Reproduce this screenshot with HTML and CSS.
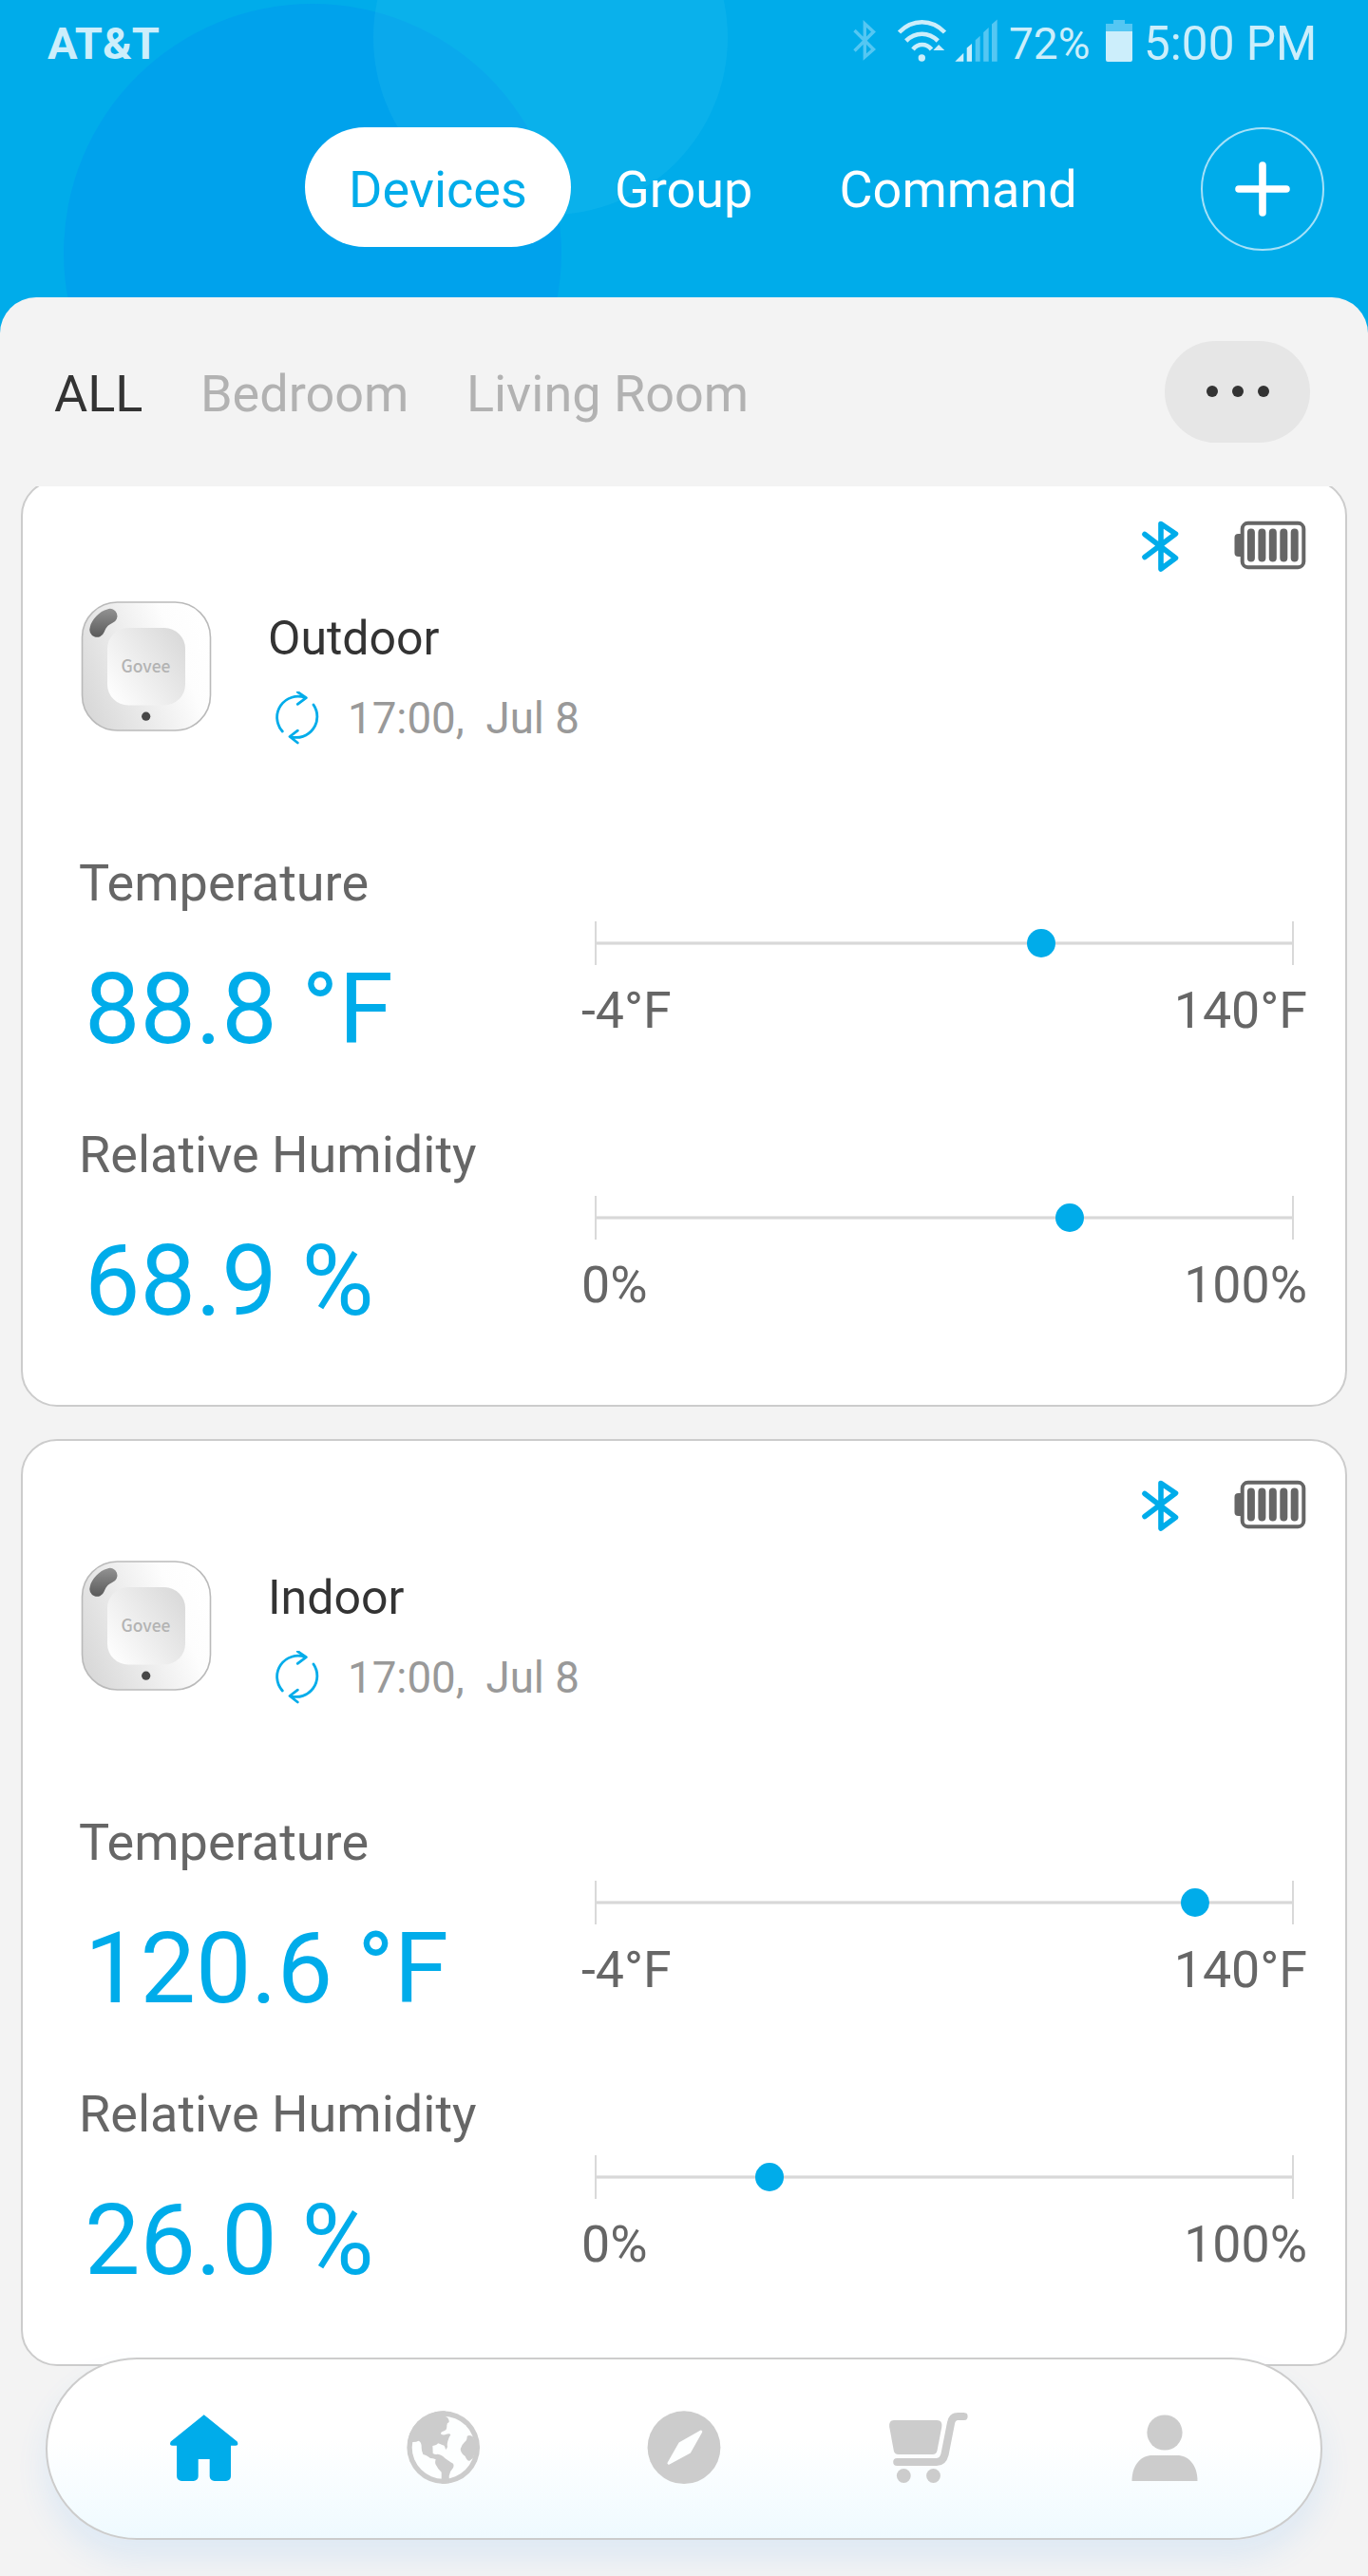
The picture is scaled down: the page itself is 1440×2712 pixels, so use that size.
FILE: index.html
```html
<!DOCTYPE html>
<html lang="en">
<head>
<meta charset="utf-8">
<title>Devices</title>
<link rel="stylesheet" href="styles.css">
</head>
<body>
<svg class="sprite" aria-hidden="true">
  <defs>
    <linearGradient id="shell" x1="0" y1="0.7" x2="1" y2="0.3">
      <stop offset="0" stop-color="#d9d9d9"/><stop offset="0.75" stop-color="#fdfdfd"/><stop offset="1" stop-color="#fff"/>
    </linearGradient>
    <linearGradient id="button" x1="0" y1="0.9" x2="1" y2="0.2">
      <stop offset="0" stop-color="#fff"/><stop offset="1" stop-color="#dadada"/>
    </linearGradient>
    <linearGradient id="slot" x1="0" y1="0" x2="0" y2="1">
      <stop offset="0" stop-color="#929292"/><stop offset="1" stop-color="#5a5a5a"/>
    </linearGradient>
    <clipPath id="globe-clip"><circle cx="171" cy="170" r="115"/></clipPath>
  </defs>
  <symbol id="bluetooth" viewBox="1200 547 44 56">
    <path d="M1206 562.500 1238.500 587.500 1223 599V551.500L1238.500 562 1206 586.500" fill="none" stroke="#00acea" stroke-width="5.600" stroke-linejoin="round" stroke-linecap="round"/>
  </symbol>
  <symbol id="battery" viewBox="1299 547 76 56">
    <path d="M1306 562h-2.500a4 4 0 0 0-4 4v16a4 4 0 0 0 4 4h2.500z" fill="#666"/>
    <rect x="1307.700" y="550.800" width="64.600" height="46.400" rx="6" fill="none" stroke="#666" stroke-width="4"/>
    <path d="M1316.900 560.500v27M1328.400 560.500v27M1339.800 560.500v27M1351.300 560.500v27M1362.700 560.500v27" stroke="#666" stroke-width="8" stroke-linecap="round"/>
  </symbol>
  <symbol id="sync" viewBox="284 728 58 58">
    <g fill="none" stroke="#00acea" stroke-width="2.800" stroke-linecap="round" stroke-linejoin="round">
      <path d="M296.300 770A22 22 0 0 1 320.500 734.700M312.300 728.500 321.300 734.600 312.300 741.300"/>
      <path d="M329 742A22 22 0 0 1 304.500 775.500M312.300 769.200 304 775.500 312.300 782"/>
    </g>
  </symbol>
  <symbol id="sensor" viewBox="84 632 140 140">
    <rect x="86.500" y="634" width="135" height="135" rx="37" fill="url(#shell)" stroke="#bababa" stroke-width="1.600"/>
    <rect x="113" y="661" width="82" height="81.500" rx="22" fill="url(#button)"/>
    <path d="M94.800 660C96 653 105 643 113 641.400A7.600 7.600 0 0 1 118.500 655.800C112 659 112 661 109.500 665.800A7.600 7.600 0 0 1 94.800 660Z" fill="url(#slot)"/>
    <circle cx="153.700" cy="754.200" r="4.600" fill="#484848"/>
    <text x="127.500" y="708" class="sensor-brand" textLength="52" lengthAdjust="spacingAndGlyphs">Govee</text>
  </symbol>
</svg>

<div class="app">
  <header class="header">
    <span class="bubble bubble-dark"></span>
    <span class="bubble bubble-light"></span>
    <div class="status">
      <span class="carrier">AT&amp;T</span>
      <svg class="signals" viewBox="896 0 156 90">
        <path d="M899.500 32 919.500 52 910.300 60V25L919.500 33.500 899.500 53.500" fill="none" stroke="#54c7f3" stroke-width="3.400"/>
        <g fill="none" stroke="#cceefb" stroke-width="4.600">
          <path d="M946.500 34Q957 23.300 970.500 23.300T994.500 34"/>
          <path d="M953.700 43Q961 35.700 970.500 35.700T987.300 43"/>
          <path d="M961 52Q965 47 970.700 47T980.500 52"/>
        </g>
        <circle cx="970.300" cy="61" r="3.700" fill="#cceefb"/>
        <path d="M982.300 53h12l-6.200-6zM1005.300 64.700h9v-9zM1017.700 64.700v-14.200l5.300-4.500v18.700z" fill="#cceefb"/>
        <path d="M1026.700 64.700V42.300l5-4.500v26.900zM1035.200 64.700V34l5.500-5v35.700zM1044 64.700V25.500l5.700-5v44.200z" fill="#54c7f3"/>
      </svg>
      <span class="charge">72%</span>
      <svg class="phone-battery" viewBox="1164 0 28 90">
        <path d="M1172 21h12v4h8v8h-28v-8h8z" fill="#54c7f3"/>
        <path d="M1164 33h28v30a2 2 0 0 1-2 2h-24a2 2 0 0 1-2-2z" fill="#cceefb"/>
      </svg>
      <span class="clock">5:00 PM</span>
    </div>
    <div class="topbar">
      <nav class="tabs">
        <a class="tab tab-active">Devices</a>
        <a class="tab">Group</a>
        <a class="tab">Command</a>
      </nav>
      <svg class="add" viewBox="0 0 130 130">
        <circle cx="65" cy="65" r="64" fill="none" stroke="#a6e1f8" stroke-width="2"/>
        <path d="M65 40v50M40 65h50" stroke="#fff" stroke-width="7.600" stroke-linecap="round"/>
      </svg>
    </div>
  </header>

  <main class="panel">
    <div class="filters">
      <span class="filter filter-active">ALL</span>
      <span class="filter">Bedroom</span>
      <span class="filter">Living Room</span>
      <span class="more"><i></i><i></i><i></i></span>
    </div>
    <div class="list">
      <section class="card">
        <div class="indicators">
          <svg class="icon-bluetooth"><use href="#bluetooth"/></svg>
          <svg class="icon-battery"><use href="#battery"/></svg>
        </div>
        <div class="device">
          <svg class="device-image"><use href="#sensor"/></svg>
          <div class="device-info">
            <div class="device-name">Outdoor</div>
            <div class="device-time"><svg class="icon-sync"><use href="#sync"/></svg><span>17:00,&nbsp; Jul 8</span></div>
          </div>
        </div>
        <div class="readings">
          <div class="values">
            <div class="reading"><div class="label">Temperature</div><div class="value">88.8 °F</div></div>
            <div class="reading"><div class="label">Relative Humidity</div><div class="value">68.9 %</div></div>
          </div>
          <div class="gauges">
            <div class="gauge">
              <div class="scale"><span class="line"></span><span class="dot" style="left:63.88%"></span></div>
              <div class="range"><span>-4°F</span><span>140°F</span></div>
            </div>
            <div class="gauge">
              <div class="scale"><span class="line"></span><span class="dot" style="left:68%"></span></div>
              <div class="range"><span>0%</span><span>100%</span></div>
            </div>
          </div>
        </div>
      </section>

      <section class="card">
        <div class="indicators">
          <svg class="icon-bluetooth"><use href="#bluetooth"/></svg>
          <svg class="icon-battery"><use href="#battery"/></svg>
        </div>
        <div class="device">
          <svg class="device-image"><use href="#sensor"/></svg>
          <div class="device-info">
            <div class="device-name">Indoor</div>
            <div class="device-time"><svg class="icon-sync"><use href="#sync"/></svg><span>17:00,&nbsp; Jul 8</span></div>
          </div>
        </div>
        <div class="readings">
          <div class="values">
            <div class="reading"><div class="label">Temperature</div><div class="value">120.6 °F</div></div>
            <div class="reading"><div class="label">Relative Humidity</div><div class="value">26.0 %</div></div>
          </div>
          <div class="gauges">
            <div class="gauge">
              <div class="scale"><span class="line"></span><span class="dot" style="left:86.07%"></span></div>
              <div class="range"><span>-4°F</span><span>140°F</span></div>
            </div>
            <div class="gauge">
              <div class="scale"><span class="line"></span><span class="dot" style="left:24.86%"></span></div>
              <div class="range"><span>0%</span><span>100%</span></div>
            </div>
          </div>
        </div>
      </section>
    </div>
  </main>

  <nav class="dock">
    <svg viewBox="169.300 2533 90 90">
      <path d="M215 2542.300 250 2570.500Q252 2574.700 248 2574.700H243.300V2607a5 5 0 0 1-5 5H226a5 5 0 0 1-5-5V2589H209V2607a5 5 0 0 1-5 5H191.400a5 5 0 0 1-5-5V2574.700H182Q178 2574.700 180 2570.500Z" fill="#00acea"/>
    </svg>
    <svg viewBox="422.300 2533 90 90">
      <g transform="translate(410 2520) scale(.33333)">
        <circle cx="171" cy="170" r="115" fill="#ccc"/>
        <circle cx="171" cy="170" r="99" fill="#fdffff"/>
        <path clip-path="url(#globe-clip)" fill="#ccc" d="M178 50 178 72Q190 78 189 90 181 92 182 103 182 115 175 117 160 122 164 128 172 133 180 128 192 125 194 130 188 138 185 150 182 160 184 168 180 178 178 176 175 162 169 163 160 158 154 157 150 164 137 165L138 189Q146 193 152 191 168 193 176 204 192 216 200 220 206 225 202 234 192 244 189 260L190 285H165V248Q152 236 148 226 143 218 147 208 138 204 130 204 117 193 107 192 101 180 102 165 100 150 92 149 85 155 60 152V50Z"/>
        <path fill="#ccc" d="M264 136Q252 128 246 135 246 148 238 153 228 162 225 175 225 188 240 198 246 214 254 212L264 204 278 170Z"/>
      </g>
    </svg>
    <svg viewBox="675 2533 90 90">
      <circle cx="720" cy="2576.700" r="38.400" fill="#ccc"/>
      <path d="M737.800 2560 715.800 2572.500 704 2593.300 725.700 2581.500Z" fill="#fdffff" stroke="#fdffff" stroke-width="3" stroke-linejoin="round"/>
    </svg>
    <svg viewBox="927.700 2533 90 90">
      <path d="M940.500 2548H986Q992 2548 991 2555L986.200 2580Q985.300 2584 981.500 2584H945.500Q941.300 2584 940.500 2580L935.900 2555Q935.200 2548 940.500 2548Z" fill="#ccc"/>
      <path d="M1014.200 2544H1008Q1002 2544 1000.700 2551L994.200 2584Q992.200 2592 985.500 2592H944" fill="none" stroke="#ccc" stroke-width="8.200" stroke-linecap="round"/>
      <circle cx="951" cy="2606.500" r="7.400" fill="#ccc"/><circle cx="982.200" cy="2606.500" r="7.400" fill="#ccc"/>
    </svg>
    <svg viewBox="1181 2533 90 90">
      <circle cx="1226" cy="2561" r="18.600" fill="#ccc"/>
      <path d="M1191.500 2612C1191.500 2595 1201 2585 1213 2585H1239C1251 2585 1260.500 2595 1260.500 2612Z" fill="#ccc"/>
    </svg>
  </nav>
</div>
</body>
</html>
```
FILE: styles.css
```css
* { box-sizing: border-box; }
body {
  margin: 0;
  font-family: Roboto, "Liberation Sans", sans-serif;
  font-size: 54px;
  line-height: 60px;
}
svg { display: block; flex: none; overflow: visible; }
.sprite { position: absolute; width: 0; height: 0; }

.app {
  position: relative;
  display: flex;
  flex-direction: column;
  width: 1440px;
  height: 2712px;
  overflow: hidden;
  background: #00acea;
}

/* Header */
.header { position: relative; height: 313px; flex: none; }
.bubble { position: absolute; border-radius: 50%; }
.bubble-dark { left: 67px; top: 4px; width: 524px; height: 524px; background: #00a2ec; }
.bubble-light { left: 393px; top: -147px; width: 373px; height: 373px; background: rgba(50, 200, 240, 0.2); }

.status {
  position: relative;
  display: flex;
  align-items: center;
  height: 90px;
  padding: 1px 55px 0 50px;
  color: #cceefb;
}
.carrier { margin-right: auto; font-size: 47px; font-weight: 700; }
.signals { width: 156px; height: 90px; margin: -1px 10px 0 0; }
.charge { width: 86px; font-size: 46px; white-space: nowrap; }
.phone-battery { width: 28px; height: 90px; margin: -1px 12px 0 16px; }
.clock { width: 181px; font-size: 49.5px; white-space: nowrap; }

.topbar {
  position: relative;
  display: flex;
  justify-content: space-between;
  margin-top: 44px;
  padding: 0 46px 0 321px;
}
.tabs { display: flex; }
.tab {
  height: 126px;
  padding: 5px 45px 0 46px;
  border-radius: 63px;
  color: #fff;
  line-height: 121px;
}
.tab-active { width: 280px; background: #fff; color: #00acea; }
.add { width: 130px; height: 130px; }

/* Content panel */
.panel {
  position: relative;
  flex: 1;
  border-radius: 38px 38px 0 0;
  background: #f3f3f3;
}
.filters {
  display: flex;
  align-items: center;
  gap: 60.5px;
  height: 199px;
  padding: 0 61px 0 57px;
}
.filter { padding-top: 4px; color: #b2b2b2; }
.filter-active { color: #333; }
.more {
  display: flex;
  align-items: center;
  justify-content: center;
  gap: 15px;
  width: 153px;
  height: 107px;
  margin-left: auto;
  border-radius: 54px;
  background: #e6e6e6;
}
.more i { width: 12px; height: 12px; margin-top: -1px; border-radius: 50%; background: #333; }

.list { height: 2200px; overflow: hidden; }
.card {
  height: 976px;
  margin: 0 22px 34px;
  padding: 40px 41px 0 60px;
  border: 2px solid #ccc;
  border-radius: 38px;
  background: #fff;
}
.card:first-child { margin-top: -7px; }

.indicators { display: flex; justify-content: flex-end; gap: 56px; height: 56px; }
.icon-bluetooth { width: 44px; height: 56px; }
.icon-battery { width: 76px; height: 56px; }

.device { display: flex; gap: 58px; height: 154px; margin-top: 29px; }
.device-image { width: 140px; height: 140px; }
.sensor-brand { font: 500 18px "Noto Sans CJK SC", "Noto Sans", sans-serif; fill: #b3b3b3; }
.device-info { padding-top: 10px; }
.device-name { color: #333; font-size: 50px; }
.device-time {
  display: flex;
  align-items: center;
  gap: 23px;
  height: 58px;
  margin: 26px 0 0 3px;
  color: #999;
  font-size: 45.7px;
}
.icon-sync { width: 58px; height: 58px; }

.readings { display: flex; justify-content: space-between; margin-top: 112px; color: #666; }
.values { display: flex; flex-direction: column; gap: 61px; margin-left: -1px; }
.label { line-height: 64px; }
.value {
  margin: 41px 0 0 6px;
  color: #00acea;
  font-size: 104px;
  line-height: 120px;
}
.gauges { display: flex; flex-direction: column; gap: 165px; width: 764px; padding-top: 72px; margin-right: -1px; }
.gauge { height: 124px; }
.scale {
  position: relative;
  display: flex;
  align-items: center;
  height: 46px;
  margin: 0 14px;
  border: solid #d9d9d9;
  border-width: 0 2px;
}
.line { flex: 1; height: 4px; border: solid #e8e8e8; border-width: 1px 0; background: #d8d8d8; }
.dot {
  position: absolute;
  top: 8px;
  width: 30px;
  height: 30px;
  margin-left: -15px;
  border-radius: 50%;
  background: #00acea;
}
.range { display: flex; justify-content: space-between; margin-top: 18px; font-size: 53.7px; }

/* Bottom navigation */
.dock {
  position: absolute;
  left: 48px;
  bottom: 38px;
  display: grid;
  grid-template-columns: repeat(5, 1fr);
  place-items: center;
  width: 1344px;
  height: 192px;
  padding: 0 38px;
  border: 2px solid #ccc;
  border-radius: 96px;
  background: linear-gradient(#fff 45%, #effaff);
  box-shadow: 0 20px 32px rgba(52, 152, 255, 0.11);
}
.dock svg { width: 90px; height: 90px; }
```
